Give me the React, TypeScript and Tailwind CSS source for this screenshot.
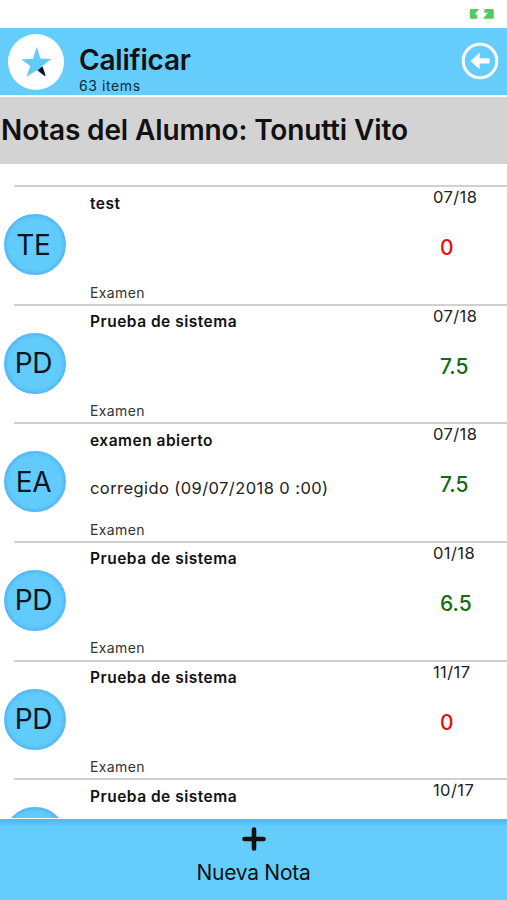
import React from "react";

interface Grade {
  id: number;
  initials?: string;
  title: string;
  detail?: string;
  kind?: string;
  date: string;
  score?: string;
  passed?: boolean;
}

const grades: Grade[] = [
  { id: 1, initials: "TE", title: "test", kind: "Examen", date: "07/18", score: "0", passed: false },
  { id: 2, initials: "PD", title: "Prueba de sistema", kind: "Examen", date: "07/18", score: "7.5", passed: true },
  {
    id: 3,
    initials: "EA",
    title: "examen abierto",
    detail: "corregido (09/07/2018 0 :00)",
    kind: "Examen",
    date: "07/18",
    score: "7.5",
    passed: true,
  },
  { id: 4, initials: "PD", title: "Prueba de sistema", kind: "Examen", date: "01/18", score: "6.5", passed: true },
  { id: 5, initials: "PD", title: "Prueba de sistema", kind: "Examen", date: "11/17", score: "0", passed: false },
  { id: 6, title: "Prueba de sistema", date: "10/17" },
];

const BatteryIcon = () => (
  <svg className="h-3 w-[26px]" viewBox="0 0 26 12">
    <path d="M2 1H10L5.8 6.6H8.5L8 10.8H2Q.8 10.8.8 9.5V2.3Q.8 1 2 1Z" fill="#55c862" />
    <path d="M15.5 1H23.5Q24.8 1 24.8 2.3V9.5Q24.8 10.8 23.5 10.8H14L18.8 4.8H15.2Z" fill="#55c862" />
  </svg>
);

const StarIcon = () => (
  <svg className="h-14 w-14" viewBox="0 0 56 56">
    <path
      d="M28.8 12.8L32.3 24.6L43.3 25L34.2 32L38 43L28.5 36.5L18.3 43L22.3 32L13.2 25.5L25 24.8Z"
      fill="#61cbfb"
    />
    <path d="M30.8 36.2L34.2 33.6L36.6 41Z" fill="#111" stroke="#111" strokeWidth="1.4" strokeLinejoin="round" />
  </svg>
);

const BackIcon = () => (
  <svg className="h-[38px] w-[38px]" viewBox="0 0 38 38">
    <circle cx="19" cy="19" r="16.8" fill="none" stroke="white" strokeWidth="3" />
    <path d="M9.6 19L18.6 10.8V16.3H27.5Q28.7 16.3 28.7 17.4V20.3Q28.7 21.4 27.5 21.4H18.6V27.2Z" fill="white" />
  </svg>
);

const GradeRow: React.FC<{ grade: Grade }> = ({ grade }) => (
  <li className="h-[118.65px] shrink-0">
    <div className="ml-3.5 h-0.5 bg-[#d0d0d0]" />
    <div className="flex h-[116.65px]">
      <div className="w-[90px] shrink-0 pl-[3.5px] pt-[27px]">
        <div className="flex h-[61px] w-[62px] items-center justify-center rounded-full border-2 border-[#58b9f7] bg-[#61cbfb] pr-0.5 text-[28px] tracking-[-0.3px] text-[#06151e] shadow-[inset_0_0_3px_#4ab0f4]">
          {grade.initials}
        </div>
      </div>
      <div className="flex min-w-0 flex-1 flex-col">
        <h3 className="mt-[4.5px] h-6 text-[15.5px] font-semibold leading-6 tracking-[0.5px]">
          {grade.title}
        </h3>
        {/* Reserved even when the grade has no detail */}
        <p className="mt-[23.5px] h-6 whitespace-nowrap text-[16.5px] leading-6 tracking-[0.42px] text-[#222]">
          {grade.detail}
        </p>
        {grade.kind && (
          <span className="mt-[19.5px] text-[14px] leading-5 tracking-[0.4px] text-[#333]">
            {grade.kind}
          </span>
        )}
      </div>
      <div className="w-[74px] shrink-0">
        <div className="text-[16.5px] leading-5 tracking-[0.4px] text-[#222]">{grade.date}</div>
        {grade.score && (
          <div
            className={`mt-[27px] pl-[7px] text-[21px] font-medium leading-7 ${
              grade.passed ? "text-[#126b12]" : "text-[#e80d0d]"
            }`}
          >
            {grade.score}
          </div>
        )}
      </div>
    </div>
  </li>
);

export default function App() {
  return (
    <div className="flex h-[900px] w-full flex-col overflow-hidden bg-white font-['Inter',sans-serif] text-[#111]">
      {/* Status bar */}
      <div className="flex h-7 shrink-0 justify-end pr-3 pt-2">
        <BatteryIcon />
      </div>

      {/* Header */}
      <header className="flex h-[67px] shrink-0 bg-[#64cdfc] pl-2">
        <div className="mt-[5.5px] h-14 w-14 rounded-full bg-white">
          <StarIcon />
        </div>
        <div className="ml-[15px] flex-1 pt-4">
          <h1 className="text-[28px] font-semibold leading-8 tracking-[-0.2px]">Calificar</h1>
          <p className="mt-0.5 text-[14px] leading-4 tracking-[0.6px] text-[#102c3b]">63 items</p>
        </div>
        <button className="mr-[8px] mt-[14px] h-[38px]" aria-label="Volver">
          <BackIcon />
        </button>
      </header>

      <div className="mt-0.5 flex h-[67px] shrink-0 items-center bg-[#d3d3d3] pb-0.5 pl-px">
        <h2 className="whitespace-nowrap text-[28px] font-semibold leading-8 tracking-[-0.13px]">
          Notas del Alumno: Tonutti Vito
        </h2>
      </div>

      {/* Grades */}
      <ul className="flex h-[654px] shrink-0 flex-col overflow-hidden pt-[21px]">
        {grades.map((grade) => (
          <GradeRow key={grade.id} grade={grade} />
        ))}
      </ul>

      {/* Footer */}
      <button className="mt-auto flex h-[81px] shrink-0 flex-col items-center bg-linear-to-b from-[#4cb4f5] to-[#64cdfc] to-[8px] pt-2">
        <svg className="h-6 w-6" viewBox="0 0 24 24">
          <path d="M12 2.5V21.5M2.5 12H21.5" stroke="#111" strokeWidth="4.6" strokeLinecap="round" />
        </svg>
        <span className="mt-2 text-[21px] leading-7 tracking-[-0.28px]">Nueva Nota</span>
      </button>
    </div>
  );
}
